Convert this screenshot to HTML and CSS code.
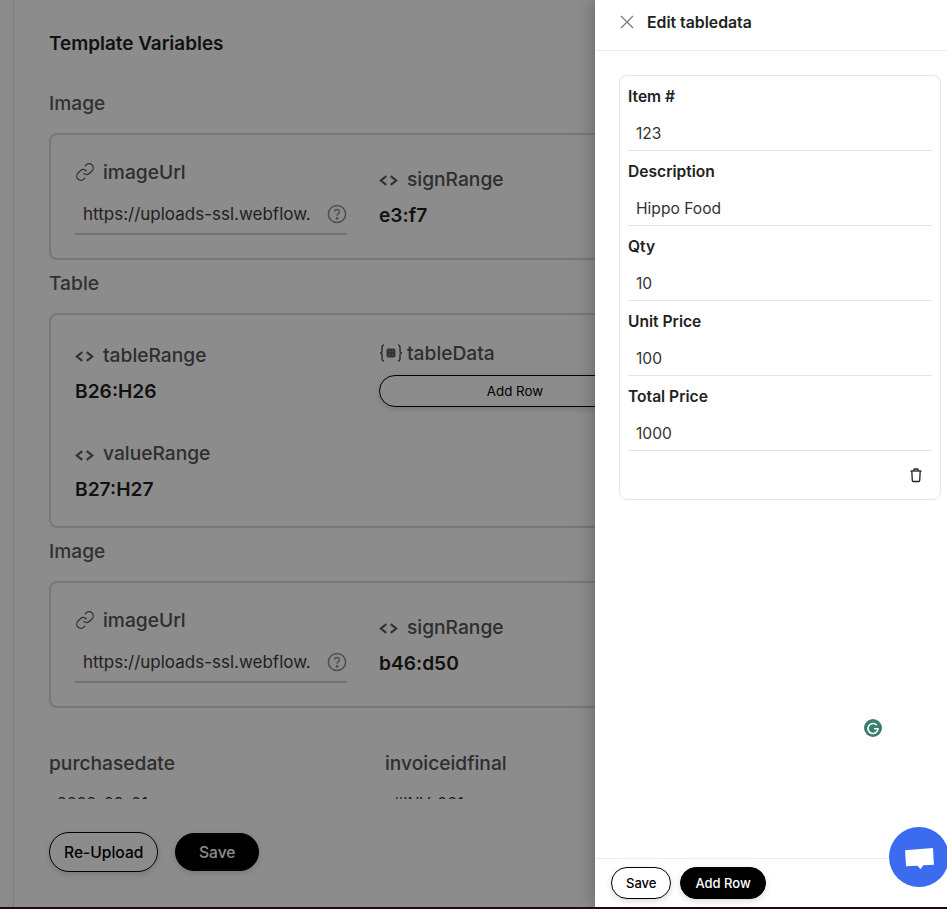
FILE: index.html
```html
<!DOCTYPE html>
<html lang="en">
<head>
    <meta charset="UTF-8">
    <meta name="viewport" content="width=device-width, initial-scale=1.0">
    <title>Edit tabledata</title>
    <link rel="stylesheet" href="styles.css">
</head>
<body>
    <div class="app">
        <div class="sidebar"></div>
        <main class="main">
            <div class="content">
                <h1 class="page-title">Template Variables</h1>

                <h2 class="section-title">Image</h2>
                <section class="var-card">
                    <div class="field url-field">
                        <div class="field-label link-label">
                            <svg class="icon link-icon" viewBox="0 0 24 24"><path d="M10 13a5 5 0 0 0 7.54.54l3-3a5 5 0 0 0-7.07-7.07l-1.72 1.71"/><path d="M14 11a5 5 0 0 0-7.54-.54l-3 3a5 5 0 0 0 7.07 7.07l1.71-1.71"/></svg>
                            imageUrl
                        </div>
                        <div class="url-input">
                            <span class="url-text">https://uploads-ssl.webflow.</span>
                            <svg class="help-icon" viewBox="0 0 20 20"><circle cx="10" cy="10" r="8.6"/><path d="M7.6 7.8a2.4 2.4 0 1 1 3.6 2.1c-.8.5-1.2.9-1.2 1.8"/><circle class="dot" cx="10" cy="14.4" r=".6"/></svg>
                        </div>
                    </div>
                    <div class="field">
                        <div class="field-label">
                            <svg class="icon code-icon" viewBox="0 0 16 10"><path d="M6 1 1 5l5 4"/><path d="M10 1l5 4-5 4"/></svg>
                            signRange
                        </div>
                        <div class="field-value">e3:f7</div>
                    </div>
                </section>

                <h2 class="section-title">Table</h2>
                <section class="var-card">
                    <div class="field">
                        <div class="field-label">
                            <svg class="icon code-icon" viewBox="0 0 16 10"><path d="M6 1 1 5l5 4"/><path d="M10 1l5 4-5 4"/></svg>
                            tableRange
                        </div>
                        <div class="field-value">B26:H26</div>
                    </div>
                    <div class="field table-field">
                        <div class="field-label table-label">
                            <svg class="icon table-icon" viewBox="0 0 24 18"><path d="M5 1C3 1 3 2.500 3 4v3c0 1-.6 2-2 2 1.400 0 2 1 2 2v3c0 1.500 0 3 2 3"/><path d="M19 1c2 0 2 1.500 2 3v3c0 1 .6 2 2 2-1.400 0-2 1-2 2v3c0 1.500 0 3-2 3"/><rect class="chip" x="7.500" y="4.500" width="9" height="9" rx="2"/><path class="chip-grid" d="M10.500 4.500v9M13.500 4.500v9M7.500 7.500h9M7.500 10.500h9"/></svg>
                            tableData
                        </div>
                        <button class="btn btn-wide">Add Row</button>
                    </div>
                    <div class="field">
                        <div class="field-label">
                            <svg class="icon code-icon" viewBox="0 0 16 10"><path d="M6 1 1 5l5 4"/><path d="M10 1l5 4-5 4"/></svg>
                            valueRange
                        </div>
                        <div class="field-value">B27:H27</div>
                    </div>
                </section>

                <h2 class="section-title">Image</h2>
                <section class="var-card">
                    <div class="field url-field">
                        <div class="field-label link-label">
                            <svg class="icon link-icon" viewBox="0 0 24 24"><path d="M10 13a5 5 0 0 0 7.54.54l3-3a5 5 0 0 0-7.07-7.07l-1.72 1.71"/><path d="M14 11a5 5 0 0 0-7.54-.54l-3 3a5 5 0 0 0 7.07 7.07l1.71-1.71"/></svg>
                            imageUrl
                        </div>
                        <div class="url-input">
                            <span class="url-text">https://uploads-ssl.webflow.</span>
                            <svg class="help-icon" viewBox="0 0 20 20"><circle cx="10" cy="10" r="8.6"/><path d="M7.6 7.8a2.4 2.4 0 1 1 3.6 2.1c-.8.5-1.2.9-1.2 1.8"/><circle class="dot" cx="10" cy="14.4" r=".6"/></svg>
                        </div>
                    </div>
                    <div class="field">
                        <div class="field-label">
                            <svg class="icon code-icon" viewBox="0 0 16 10"><path d="M6 1 1 5l5 4"/><path d="M10 1l5 4-5 4"/></svg>
                            signRange
                        </div>
                        <div class="field-value">b46:d50</div>
                    </div>
                </section>

                <div class="plain-fields">
                    <div>
                        <div class="plain-label">purchasedate</div>
                        <div class="plain-value">2022-09-01</div>
                    </div>
                    <div>
                        <div class="plain-label">invoiceidfinal</div>
                        <div class="plain-value">#INV-001</div>
                    </div>
                </div>
            </div>
            <div class="main-footer">
                <button class="btn btn-large">Re-Upload</button>
                <button class="btn btn-large btn-black">Save</button>
            </div>
        </main>
        <div class="scrim"></div>

        <aside class="drawer">
            <header class="drawer-head">
                <svg class="close-icon" viewBox="0 0 14 14"><path d="M1 1l12 12M13 1 1 13"/></svg>
                <span>Edit tabledata</span>
            </header>
            <div class="drawer-body">
                <div class="row-card">
                    <div class="row-label">Item #</div>
                    <div class="row-input">123</div>
                    <div class="row-label">Description</div>
                    <div class="row-input">Hippo Food</div>
                    <div class="row-label">Qty</div>
                    <div class="row-input">10</div>
                    <div class="row-label">Unit Price</div>
                    <div class="row-input">100</div>
                    <div class="row-label">Total Price</div>
                    <div class="row-input">1000</div>
                    <div class="row-actions">
                        <svg class="trash-icon" viewBox="0 0 16 16"><path d="M2.500 4h11"/><path d="M5.800 4V2.800c0-.5.3-.8.8-.8h2.800c.5 0 .8.3.8.8V4"/><path d="M3.800 4l.5 9.500c0 .6.4 1 1 1h5.400c.6 0 1-.4 1-1l.5-9.500"/></svg>
                    </div>
                </div>
            </div>
            <footer class="drawer-foot">
                <button class="btn btn-small">Save</button>
                <button class="btn btn-small btn-black">Add Row</button>
            </footer>
        </aside>

        <div class="grammarly">
            <svg viewBox="0 0 18 18"><path d="M12.800 6.200A5 5 0 1 0 14 9.800H10"/></svg>
        </div>
        <div class="chat-bubble">
            <svg viewBox="0 0 32 26"><path d="M1 4.500 30 2l1 17.500-11 .6-3 4-3-3.600-12 .5z"/></svg>
        </div>
    </div>
</body>
</html>
```

FILE: styles.css
```css
* { box-sizing: border-box; }
html, body { margin: 0; height: 100%; }
body { background: #1c0a0c; font-family: Inter, "Liberation Sans", sans-serif; overflow: hidden; }

.app { position: relative; display: flex; height: 907px; background: #fff; overflow: hidden; }
.sidebar { width: 14px; flex: none; border-right: 1px solid #e2e2e2; }
.main { flex: 1; min-width: 0; padding-left: 35px; }
.scrim { position: absolute; inset: 0; background: rgba(0, 0, 0, 0.45); }

.content { height: 799px; width: 640px; overflow: hidden; padding-top: 32px; }
.page-title { margin: 0 0 35px; font-size: 18.9px; line-height: 24px; font-weight: 600; color: #1f1f1f; }
.section-title { margin: 0 0 18px; font-size: 19.2px; line-height: 24px; font-weight: 500; color: #5a5a5a; }

.var-card { display: grid; grid-template-columns: 272px 272px; column-gap: 32px; row-gap: 34px; align-items: center; padding: 25px 24px 23px; margin-bottom: 11px; border: 2px solid #d9d9d9; border-radius: 8px; }
.field { padding-bottom: 2px; }
.url-field, .table-field { padding-bottom: 0; }
.field-label { display: flex; align-items: center; gap: 9px; height: 24px; font-size: 19.2px; font-weight: 500; color: #555; }
.link-label { gap: 8px; }
.table-label { gap: 4px; margin-top: 1px; }
.field-value { margin-top: 12px; height: 24px; line-height: 24px; font-size: 19.2px; font-weight: 600; color: #1f1f1f; }

.icon { flex: none; fill: none; stroke: #5c5c5c; }
.link-icon { width: 20px; height: 20px; stroke-width: 1.5; }
.code-icon { width: 19px; height: 11px; margin-top: 4px; stroke-width: 2; }
.table-icon { width: 24px; height: 18px; stroke-width: 1.5; }
.table-icon .chip { fill: #5c5c5c; stroke: none; }
.table-icon .chip-grid { stroke: #8c8c8c; stroke-width: .5; }

.url-input { display: flex; align-items: center; justify-content: space-between; height: 39px; margin-top: 12px; padding: 0 0 2px 8px; border-bottom: 2px solid #d0d0d0; }
.url-text { font-size: 17px; color: #3c3c3c; white-space: nowrap; }
.help-icon { width: 20px; height: 20px; fill: none; stroke: #8a8f99; stroke-width: 1.5; }
.help-icon .dot { fill: #8a8f99; }

.plain-fields { display: grid; grid-template-columns: 336px 272px; margin-top: 43px; }
.plain-label { font-size: 19.2px; line-height: 24px; font-weight: 500; color: #555; }
.plain-value { margin-top: 16px; padding-left: 8px; font-size: 16px; line-height: 24px; color: #333; }

.btn { font-family: inherit; font-size: 13px; font-weight: 500; color: #000; background: #fff; border: 1px solid #000; border-radius: 20px; box-shadow: 0 2px 6px rgba(0, 0, 0, 0.15); padding: 0; }
.btn-black { background: #000; color: #fff; }
.btn-wide { display: block; width: 272px; height: 32px; margin-top: 10px; border-radius: 16px; font-size: 13.33px; font-weight: 400; }
.btn-large { height: 40px; font-size: 15.6px; padding: 0 14px; }
.btn-large.btn-black { height: 38px; padding: 0 22.5px; }
.btn-small { height: 32px; padding: 0 14px; }

.main-footer { display: flex; align-items: center; gap: 17px; padding-top: 33px; }

.drawer { position: absolute; top: 0; right: 0; bottom: 0; width: 352px; display: flex; flex-direction: column; background: #fff; box-shadow: 0 0 18px rgba(0, 0, 0, 0.3); }
.drawer-head { display: flex; align-items: center; gap: 13px; height: 51px; flex: none; padding: 0 0 6px 25px; border-bottom: 1px solid #eeeeee; font-size: 15.8px; font-weight: 600; color: #222; }
.close-icon { width: 14px; height: 14px; fill: none; stroke: #777; stroke-width: 1.2; }
.drawer-body { flex: 1; padding: 24px 6px 0 24px; }
.row-card { border: 1px solid #e4e4e7; border-radius: 8px; padding: 8px 8px 16px; }
.row-label { height: 24px; line-height: 26px; font-size: 15.6px; font-weight: 600; color: #222; }
.row-input { height: 43px; margin-bottom: 8px; padding: 14px 0 0 8px; line-height: 24px; font-size: 15.6px; color: #333; border-bottom: 1px solid #e4e4e7; }
.row-actions { display: flex; justify-content: flex-end; padding: 8px 8px 0 0; }
.trash-icon { display: block; width: 16px; height: 16px; fill: none; stroke: #222; stroke-width: 1.3; }

.drawer-foot { display: flex; align-items: center; gap: 9px; height: 49px; flex: none; padding: 0 0 0 16px; border-top: 1px solid #eeeeee; }

.grammarly { position: absolute; left: 864px; top: 719px; width: 18px; height: 18px; border-radius: 50%; background: #3b7f6c; }
.grammarly svg { display: block; width: 18px; height: 18px; fill: none; stroke: #fff; stroke-width: 1.6; }
.chat-bubble { position: absolute; left: 889px; top: 827px; width: 60px; height: 60px; display: flex; align-items: center; justify-content: center; border-radius: 50%; background: #3b6cf0; }
.chat-bubble svg { width: 31px; height: 25px; margin-top: 2px; fill: #fff; }
```
